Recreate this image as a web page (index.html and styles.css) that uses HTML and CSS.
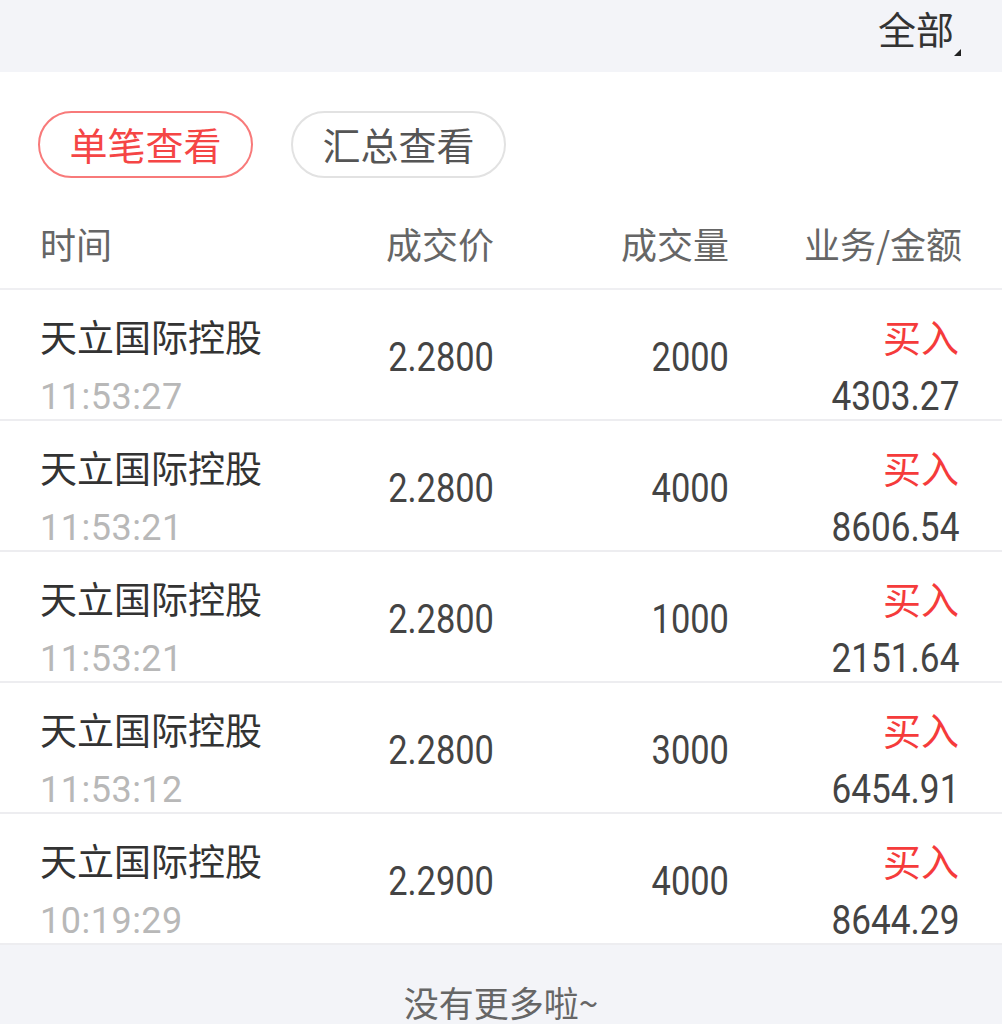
FILE: index.html
```html
<!DOCTYPE html>
<html lang="zh-CN">

<head>
    <meta charset="UTF-8">
    <meta name="viewport" content="width=device-width, initial-scale=1.0">
    <title>成交明细</title>
    <link rel="stylesheet" href="styles.css">
</head>

<body>

    <div class="topbar">
        <span class="filter">全部</span>
    </div>

    <div class="panel">
        <div class="tabs">
            <a href="#" class="tab active">单笔查看</a>
            <a href="#" class="tab">汇总查看</a>
        </div>

        <div class="grid thead">
            <div>时间</div>
            <div class="r">成交价</div>
            <div class="r">成交量</div>
            <div class="r">业务/金额</div>
        </div>

        <div class="grid row">
            <div class="cell">
                <div class="name">天立国际控股</div>
                <div class="time">11:53:27</div>
            </div>
            <div class="mid"><span class="num">2.2800</span></div>
            <div class="mid"><span class="num">2000</span></div>
            <div class="cell r">
                <div class="side">买入</div>
                <div class="amount"><span class="num">4303.27</span></div>
            </div>
        </div>

        <div class="grid row">
            <div class="cell">
                <div class="name">天立国际控股</div>
                <div class="time">11:53:21</div>
            </div>
            <div class="mid"><span class="num">2.2800</span></div>
            <div class="mid"><span class="num">4000</span></div>
            <div class="cell r">
                <div class="side">买入</div>
                <div class="amount"><span class="num">8606.54</span></div>
            </div>
        </div>

        <div class="grid row">
            <div class="cell">
                <div class="name">天立国际控股</div>
                <div class="time">11:53:21</div>
            </div>
            <div class="mid"><span class="num">2.2800</span></div>
            <div class="mid"><span class="num">1000</span></div>
            <div class="cell r">
                <div class="side">买入</div>
                <div class="amount"><span class="num">2151.64</span></div>
            </div>
        </div>

        <div class="grid row">
            <div class="cell">
                <div class="name">天立国际控股</div>
                <div class="time">11:53:12</div>
            </div>
            <div class="mid"><span class="num">2.2800</span></div>
            <div class="mid"><span class="num">3000</span></div>
            <div class="cell r">
                <div class="side">买入</div>
                <div class="amount"><span class="num">6454.91</span></div>
            </div>
        </div>

        <div class="grid row">
            <div class="cell">
                <div class="name">天立国际控股</div>
                <div class="time">10:19:29</div>
            </div>
            <div class="mid"><span class="num">2.2900</span></div>
            <div class="mid"><span class="num">4000</span></div>
            <div class="cell r">
                <div class="side">买入</div>
                <div class="amount"><span class="num">8644.29</span></div>
            </div>
        </div>
    </div>

    <div class="nomore">没有更多啦~</div>

</body>

</html>
```

FILE: styles.css
```css
/* RESET */
* {
    margin: 0;
    padding: 0;
    box-sizing: border-box;
}

body {
    font-family: "Noto Sans CJK SC", sans-serif;
    background-color: #f3f4f8;
    color: #333;
}

/* BARRA DE TOPO */
.topbar {
    height: 72px;
    display: flex;
    justify-content: flex-end;
    align-items: center;
    padding: 0 41px 16px 0;
}

.filter {
    font-size: 38px;
    line-height: 1;
    color: #333;
    display: flex;
    align-items: flex-end;
}

.filter::after {
    content: "";
    width: 0;
    height: 0;
    border-left: 7px solid transparent;
    border-bottom: 7px solid #222;
    margin-bottom: -9px;
}

/* PAINEL */
.panel {
    background-color: #fff;
}

.tabs {
    display: flex;
    gap: 38px;
    padding: 39px 0 0 38px;
}

.tab {
    height: 67px;
    padding: 0 29.5px;
    border: 2px solid #e2e2e2;
    border-radius: 34px;
    font-size: 38px;
    line-height: 62px;
    color: #555;
    text-decoration: none;
}

.tab.active {
    border-color: #f87a7a;
    color: #f54545;
}

/* TABELA */
.grid {
    display: grid;
    grid-template-columns: 254px 200px 235px 233px;
    padding: 0 40px;
}

.r {
    text-align: right;
}

.thead {
    height: 112px;
    padding-top: 20px;
    align-items: center;
    font-size: 36px;
    color: #666;
    border-bottom: 2px solid #efeff2;
}

.row {
    height: 131px;
    border-bottom: 2px solid #ededf0;
}

.cell {
    padding-top: 20px;
}

.name {
    font-size: 37px;
    line-height: 52px;
}

.side {
    font-size: 38px;
    line-height: 52px;
    margin-right: 3px;
    color: #f53b3b;
}

.time {
    font-family: Roboto, sans-serif;
    font-size: 36px;
    line-height: 52px;
    margin-top: 9px;
    color: #b8b8b8;
    letter-spacing: 0.5px;
}

/* números estreitos, estilo DIN */
.num {
    display: inline-block;
    font-family: Roboto, sans-serif;
    font-size: 40px;
    line-height: 52px;
    color: #444;
    transform: scaleX(0.86);
    transform-origin: right center;
}

.amount {
    margin-top: 9px;
    margin-right: 3px;
}

.amount .num {
    transform: scaleX(0.88);
}

.mid {
    align-self: center;
    text-align: right;
    padding-top: 3px;
}

/* RODAPÉ */
.nomore {
    text-align: center;
    font-size: 35px;
    line-height: 42px;
    padding: 36px 0 40px;
    color: #666;
}
```
